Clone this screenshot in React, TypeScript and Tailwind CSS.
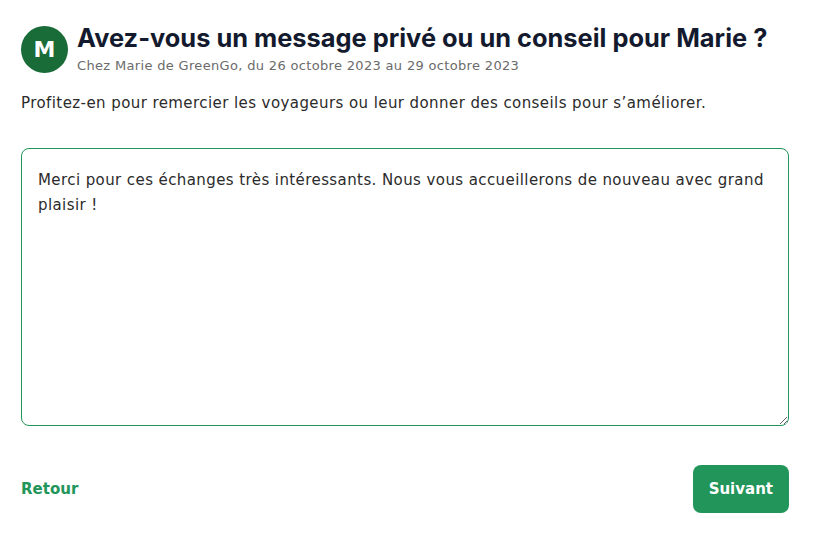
import { useEffect, useRef } from "react";

export default function App() {
  const ref = useRef<HTMLTextAreaElement>(null);

  useEffect(() => {
    const el = ref.current;
    if (!el) return;
    el.focus();
    el.setSelectionRange(el.value.length, el.value.length);
  }, []);

  return (
    <div className="min-h-screen bg-white font-['DejaVu_Sans',sans-serif] text-[#2b2b2b]">
      <div className="pl-[21px] pr-[30px] pt-[23px]">
        {/* Header */}
        <div className="flex items-center gap-[9px]">
          <div className="h-[47px] w-[47px] shrink-0 rounded-full bg-[#196b37] grid place-items-center text-white text-[22px] font-bold">
            M
          </div>
          <div className="flex flex-col">
            <h1 className="font-['Inter',sans-serif] text-[25.4px] font-bold leading-[30px] text-[#141a2e]">
              Avez-vous un message privé ou un conseil pour Marie ?
            </h1>
            <p className="mt-[4px] text-[13px] leading-[18px] tracking-[0.33px] text-[#6b6b6b]">
              Chez Marie de GreenGo, du 26 octobre 2023 au 29 octobre 2023
            </p>
          </div>
        </div>

        <p className="mt-[17px] text-[15px] leading-[22px] tracking-[0.42px]">
          Profitez-en pour remercier les voyageurs ou leur donner des conseils pour s’améliorer.
        </p>

        <textarea
          ref={ref}
          className="mt-[34px] block h-[278px] w-full resize-y rounded-[8px] border border-[#22955a] px-[16px] py-[19px] text-[15px] leading-[25px] tracking-[0.41px] text-[#2b2b2b] outline-none caret-black"
          defaultValue="Merci pour ces échanges très intéressants. Nous vous accueillerons de nouveau avec grand plaisir !"
        />

        {/* Footer */}
        <div className="mt-[39px] flex items-center justify-between">
          <button type="button" className="text-[15px] font-bold text-[#22955a]">
            Retour
          </button>
          <button
            type="button"
            className="h-[48px] rounded-[8px] bg-[#22955a] px-[16px] text-[15px] font-bold text-white"
          >
            Suivant
          </button>
        </div>
      </div>
    </div>
  );
}
